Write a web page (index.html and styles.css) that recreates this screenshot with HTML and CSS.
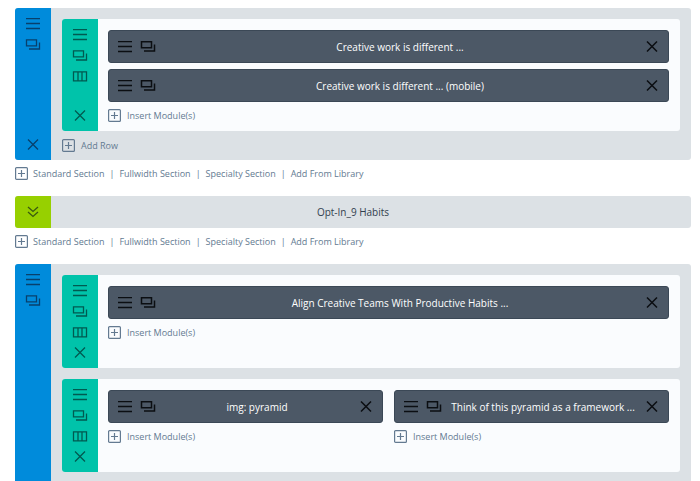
FILE: index.html
```
<!DOCTYPE html>
<html lang="en">
	<head>
		<meta charset="UTF-8" />
		<meta name="viewport" content="width=device-width, initial-scale=1.0" />
		<title>Page Builder</title>
		<link rel="stylesheet" href="styles.css">
	</head>
	<body>
		<svg class="sprite" aria-hidden="true">
			<symbol id="menu" viewBox="0 0 16 12">
				<path d="M1 0.5h14M1 5.5h14M1 10.5h14" />
			</symbol>
			<symbol id="clone" viewBox="0 0 16 12">
				<path d="M1.5 0.8h10v6h-10zM14.5 3.5v6.5H4" />
			</symbol>
			<symbol id="columns" viewBox="0 0 16 12">
				<path d="M1.5 0.8h13v9h-13zM6 0.8v9M10 0.8v9" />
			</symbol>
			<symbol id="close" viewBox="0 0 16 12">
				<path d="M3 0.5l10 10M13 0.5L3 10.5" />
			</symbol>
			<symbol id="expand" viewBox="0 0 16 12">
				<path d="M3 1l5 4.5L13 1M3 6l5 4.5L13 6" />
			</symbol>
			<symbol id="plus" viewBox="0 0 13 13">
				<rect x="0.6" y="0.6" width="11.8" height="11.8" rx="1" />
				<path d="M3 6.5h7M6.5 3v7" />
			</symbol>
		</svg>

		<main class="builder">
			<section class="section">
				<div class="bar">
					<button type="button" aria-label="Section settings"><svg class="icon"><use href="#menu" /></svg></button>
					<button type="button" aria-label="Clone section"><svg class="icon"><use href="#clone" /></svg></button>
					<button type="button" class="close" aria-label="Remove section"><svg class="icon"><use href="#close" /></svg></button>
				</div>
				<div class="section-content">
					<div class="row">
						<div class="bar row-bar">
							<button type="button" aria-label="Row settings"><svg class="icon"><use href="#menu" /></svg></button>
							<button type="button" aria-label="Clone row"><svg class="icon"><use href="#clone" /></svg></button>
							<button type="button" aria-label="Change columns"><svg class="icon"><use href="#columns" /></svg></button>
							<button type="button" class="close" aria-label="Remove row"><svg class="icon"><use href="#close" /></svg></button>
						</div>
						<div class="row-content">
							<div class="column">
								<div class="module">
									<button type="button" aria-label="Module settings"><svg class="icon"><use href="#menu" /></svg></button>
									<button type="button" aria-label="Clone module"><svg class="icon"><use href="#clone" /></svg></button>
									<span class="title">Creative work is different ...</span>
									<button type="button" aria-label="Remove module"><svg class="icon"><use href="#close" /></svg></button>
								</div>
								<div class="module">
									<button type="button" aria-label="Module settings"><svg class="icon"><use href="#menu" /></svg></button>
									<button type="button" aria-label="Clone module"><svg class="icon"><use href="#clone" /></svg></button>
									<span class="title">Creative work is different ... (mobile)</span>
									<button type="button" aria-label="Remove module"><svg class="icon"><use href="#close" /></svg></button>
								</div>
								<a class="insert" href="#"><svg class="plus"><use href="#plus" /></svg>Insert Module(s)</a>
							</div>
						</div>
					</div>
					<a class="insert add-row" href="#"><svg class="plus"><use href="#plus" /></svg>Add Row</a>
				</div>
			</section>

			<nav class="add-section">
				<svg class="plus"><use href="#plus" /></svg>
				<a href="#">Standard Section</a><span>|</span>
				<a href="#">Fullwidth Section</a><span>|</span>
				<a href="#">Specialty Section</a><span>|</span>
				<a href="#">Add From Library</a>
			</nav>

			<section class="section collapsed">
				<button type="button" class="expand" aria-label="Expand section"><svg class="icon"><use href="#expand" /></svg></button>
				<span class="title">Opt-In_9 Habits</span>
			</section>

			<nav class="add-section">
				<svg class="plus"><use href="#plus" /></svg>
				<a href="#">Standard Section</a><span>|</span>
				<a href="#">Fullwidth Section</a><span>|</span>
				<a href="#">Specialty Section</a><span>|</span>
				<a href="#">Add From Library</a>
			</nav>

			<section class="section open">
				<div class="bar">
					<button type="button" aria-label="Section settings"><svg class="icon"><use href="#menu" /></svg></button>
					<button type="button" aria-label="Clone section"><svg class="icon"><use href="#clone" /></svg></button>
				</div>
				<div class="section-content">
					<div class="row">
						<div class="bar row-bar">
							<button type="button" aria-label="Row settings"><svg class="icon"><use href="#menu" /></svg></button>
							<button type="button" aria-label="Clone row"><svg class="icon"><use href="#clone" /></svg></button>
							<button type="button" aria-label="Change columns"><svg class="icon"><use href="#columns" /></svg></button>
							<button type="button" class="close" aria-label="Remove row"><svg class="icon"><use href="#close" /></svg></button>
						</div>
						<div class="row-content">
							<div class="column">
								<div class="module">
									<button type="button" aria-label="Module settings"><svg class="icon"><use href="#menu" /></svg></button>
									<button type="button" aria-label="Clone module"><svg class="icon"><use href="#clone" /></svg></button>
									<span class="title">Align Creative Teams With Productive Habits ...</span>
									<button type="button" aria-label="Remove module"><svg class="icon"><use href="#close" /></svg></button>
								</div>
								<a class="insert" href="#"><svg class="plus"><use href="#plus" /></svg>Insert Module(s)</a>
							</div>
						</div>
					</div>
					<div class="row">
						<div class="bar row-bar">
							<button type="button" aria-label="Row settings"><svg class="icon"><use href="#menu" /></svg></button>
							<button type="button" aria-label="Clone row"><svg class="icon"><use href="#clone" /></svg></button>
							<button type="button" aria-label="Change columns"><svg class="icon"><use href="#columns" /></svg></button>
							<button type="button" class="close" aria-label="Remove row"><svg class="icon"><use href="#close" /></svg></button>
						</div>
						<div class="row-content">
							<div class="column">
								<div class="module">
									<button type="button" aria-label="Module settings"><svg class="icon"><use href="#menu" /></svg></button>
									<button type="button" aria-label="Clone module"><svg class="icon"><use href="#clone" /></svg></button>
									<span class="title">img: pyramid</span>
									<button type="button" aria-label="Remove module"><svg class="icon"><use href="#close" /></svg></button>
								</div>
								<a class="insert" href="#"><svg class="plus"><use href="#plus" /></svg>Insert Module(s)</a>
							</div>
							<div class="column">
								<div class="module">
									<button type="button" aria-label="Module settings"><svg class="icon"><use href="#menu" /></svg></button>
									<button type="button" aria-label="Clone module"><svg class="icon"><use href="#clone" /></svg></button>
									<span class="title">Think of this pyramid as a framework ...</span>
									<button type="button" aria-label="Remove module"><svg class="icon"><use href="#close" /></svg></button>
								</div>
								<a class="insert" href="#"><svg class="plus"><use href="#plus" /></svg>Insert Module(s)</a>
							</div>
						</div>
					</div>
				</div>
			</section>
		</main>
	</body>
</html>
```
FILE: styles.css
```
* {
	box-sizing: border-box;
}
body {
	margin: 0;
	font-family: "Open Sans", sans-serif;
	font-size: 9px;
	color: #637a91;
	background-color: #fff;
}
a {
	color: inherit;
	text-decoration: none;
}
button {
	display: flex;
	align-items: center;
	justify-content: center;
	padding: 0;
	border: none;
	color: inherit;
	background: none;
	cursor: pointer;
}
.sprite {
	display: none;
}
.icon,
.plus {
	display: block;
	flex: none;
	fill: none;
	stroke: currentColor;
}
.icon {
	width: 16px;
	height: 12px;
	stroke-width: 1.3;
}
.plus {
	width: 13px;
	height: 13px;
	stroke-width: 1.2;
}
.builder {
	padding: 8px 9px 0 15px;
}

/* sections */
.section {
	display: flex;
	overflow: hidden;
	border-radius: 3px;
	background-color: #dce1e5;
}
.section-content {
	flex: 1;
	min-width: 0;
	padding: 11px 11px 0;
}
.open {
	border-radius: 3px 3px 0 0;
}
.open .section-content {
	padding-bottom: 9px;
}
.collapsed {
	display: grid;
	grid-template-columns: 36px 1fr 36px;
	height: 32px;
	color: #32404e;
}
.expand {
	color: #3a5a10;
	background-color: #97d000;
}

/* vertical toolbars */
.bar {
	display: flex;
	flex: none;
	flex-direction: column;
	gap: 1px;
	width: 36px;
	padding: 6px 0;
	color: #08406c;
	background-color: #008bdb;
}
.bar button {
	height: 20px;
}
.bar .close {
	height: 18px;
	margin-top: auto;
}
.row-bar {
	color: #005a50;
	background-color: #00c3aa;
}

/* rows */
.row {
	display: flex;
	overflow: hidden;
	min-height: 93px;
	border-radius: 3px;
	background-color: #fafcfe;
}
.row + .row {
	margin-top: 11px;
}
.row-content {
	display: flex;
	flex: 1;
	gap: 11px;
	min-width: 0;
	padding: 11px 11px 2px 10px;
}
.column {
	flex: 1;
	min-width: 0;
}

/* modules */
.module {
	display: flex;
	align-items: center;
	gap: 7px;
	height: 33px;
	padding: 0 8px;
	border: 1px solid #3b4856;
	border-radius: 3px;
	color: #0b0e12;
	background-color: #4c5866;
}
.module + .module {
	margin-top: 6px;
}
.module .icon {
	stroke-width: 1.5;
}
.title {
	flex: 1;
	align-self: center;
	overflow: hidden;
	font-size: 10px;
	text-align: center;
	text-overflow: ellipsis;
	white-space: nowrap;
}
.module .title {
	color: #fff;
}

.insert {
	display: flex;
	align-items: center;
	gap: 6px;
	height: 27px;
}
.add-row {
	height: 29px;
}
.add-section {
	display: flex;
	align-items: center;
	gap: 5px;
	height: 26px;
	margin-bottom: 10px;
}
```
